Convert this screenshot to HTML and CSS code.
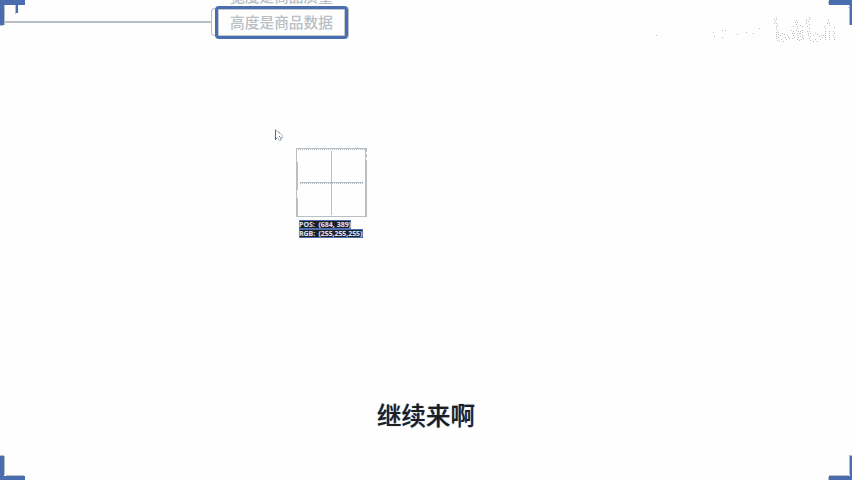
FILE: index.html
```html
<!DOCTYPE html>
<html lang="zh-CN">
<head>
<meta charset="utf-8">
<title>思维导图</title>
<link rel="stylesheet" href="styles.css">
</head>
<body>
<main class="canvas">
  <svg class="lines" width="852" height="480" viewBox="0 0 852 480" shape-rendering="crispEdges">
    <path class="g" d="M5 21h207v2H5zM4 5h1v20H4zM0 25h3v1H0zM15 5h1v9h-1zM4 455v1H0v-1zM4 456h1v19H4zM6 475h18v1H6zM828 1h1v3h-1zM849 5h1v20h-1zM848 7h1v1h-1zM849 455h3v1h-3zM849 456h1v19h-1zM829 475h20v1h-20zM828 477h1v3h-1z"/>
    <path class="b" d="M0 0h25v5H4v20H0zM16 5h2v8h-2zM829 0h23v25h-2V5h-21zM0 456h4v20h21v4H0zM850 456h2v24h-23v-4h21z"/>
  </svg>
  <div class="topic topic-above">宽度是商品质量</div>
  <div class="collapse"></div>
  <div class="topic topic-selected">高度是商品数据</div>
  <svg class="mark" width="200" height="30" viewBox="650 15 200 30" shape-rendering="crispEdges">
    <path class="dots" d="M656 35h1M713 32h1M714 36h1M722 30h1M725 30h1M722 37h1M737 34h1M746 32h1M753 33h1M759 28h1M776 17h1M774 19h1M776 19h1M775 21h1M774 23h1M776 23h1M777 25h1M776 26h1M776 28h1M777 30h1M776 32h1M778 32h1M776 34h1M778 34h1M780 35h1M782 33h1M784 34h1M776 36h1M778 37h1M776 38h1M777 40h1M779 41h1M781 39h1M783 41h1M785 37h1M787 35h1M786 39h1M788 37h1M789 38h1M791 30h1M793 26h1M793 31h1M792 33h1M794 33h1M793 35h1M794 37h1M792 38h1M795 22h1M796 20h1M797 22h1M796 24h1M797 26h1M797 28h1M796 30h1M798 31h1M797 33h1M799 33h1M797 35h1M798 37h1M797 39h1M799 40h1M800 25h1M802 26h1M800 31h1M802 30h1M800 33h1M802 32h1M802 35h1M800 36h1M802 37h1M801 39h1M803 38h1M809 17h1M806 19h1M809 19h1M806 21h1M808 21h1M806 23h1M809 24h1M807 26h1M809 28h1M807 31h1M809 31h1M808 33h1M810 33h1M808 35h1M810 36h1M809 38h1M810 40h1M813 35h1M815 33h1M817 34h1M813 41h1M815 39h1M817 41h1M819 36h1M821 35h1M820 39h1M822 37h1M824 26h1M823 35h1M825 28h1M825 31h1M825 33h1M825 35h1M825 37h1M825 39h1M828 19h1M828 21h1M827 23h1M829 23h1M829 25h1M829 31h1M829 33h1M829 35h1M829 37h1M829 39h1M834 27h1M833 31h1M834 33h1M833 35h1M834 37h1M834 39h1"/>
  </svg>
  <svg class="cursor" width="10" height="14" viewBox="0 0 10 14" shape-rendering="crispEdges">
    <path class="cursor-edge" d="M.5 .5v10l2-2 2 3 2-1-1-2h2v-2z"/><path class="b" d="M0 1h1v10H0zM1 9h1v1H1zM4 7h1v1H4z"/>
  </svg>
  <svg class="lens" width="72" height="72" viewBox="0 0 72 72" shape-rendering="crispEdges">
    <path class="g" d="M0 0h71v1H0zM0 1h1v67H0zM1 14h1v28H1zM1 50h1v18H1zM69 1h2v3h-1v2h1v3h-1v3h1v57h-2zM0 68h71v1H0zM61 -1h1v1h-1zM35 3h1v64h-1zM4 34h63v1H4z"/>
    <path class="dash" d="M2 1.5h68M4 35.5h63"/>
  </svg>
  <div class="readout"><span class="row pos">POS: &nbsp;(684, 389)</span><span class="row rgb">RGB: &nbsp;(255,255,255)</span></div>
  <div class="subtitle">继续来啊</div>
</main>
</body>
</html>
```
FILE: styles.css
```css
body { margin: 0; background: #fff; }
.canvas { position: relative; width: 852px; height: 480px; overflow: hidden; background: #fefefe; font-family: "Noto Sans CJK SC", sans-serif; }
.lines { position: absolute; left: 0; top: 0; }
.g { fill: #b8bfc5; }
.b { fill: #4a6db0; }
.topic { position: absolute; box-sizing: border-box; left: 215px; width: 133px; font-size: 14.7px; line-height: 26px; text-align: center; white-space: nowrap; font-weight: 500; color: #b8bfc5; }
.topic-above { top: -17px; }
.topic-selected { top: 6px; height: 33px; border: 3px solid #4a6db0; border-radius: 4px; box-shadow: inset 0 0 0 1px #c3c9ce, 1px 0 0 #b8bfc5; }
.collapse { position: absolute; left: 211px; top: 8px; width: 5px; height: 26px; border: 1px solid #b8bfc5; border-right: 0; border-radius: 4px 0 0 4px; }
.mark { position: absolute; left: 650px; top: 15px; }
.dots { fill: none; stroke: #b8bfc5; stroke-width: 1; transform: translateY(.5px); }
.cursor { position: absolute; left: 275px; top: 129px; }
.cursor-edge { fill: #fff; stroke: #b8bfc5; }
.lens { position: absolute; left: 296px; top: 148px; overflow: visible; }
.dash { stroke: #b8bfc5; stroke-dasharray: 1 1; }
.readout { position: absolute; left: 299px; top: 220px; display: flex; flex-direction: column; align-items: flex-start; font: 700 7px/9px "Open Sans", sans-serif; color: #d6dce3; }
.row { box-sizing: border-box; height: 9px; background: #1e1e1e; white-space: nowrap; box-shadow: inset 0 0 0 1px #4a6db0; text-shadow: 0 0 1px #4a6db0; }
.pos { width: 52px; }
.rgb { width: 64px; letter-spacing: -.08px; }
.subtitle { position: absolute; left: 0; top: 397px; width: 852px; text-align: center; font-size: 24.5px; line-height: 36px; font-weight: 500; color: #1e1e1e; text-shadow: 0 0 1px #4a6db0; }
```
